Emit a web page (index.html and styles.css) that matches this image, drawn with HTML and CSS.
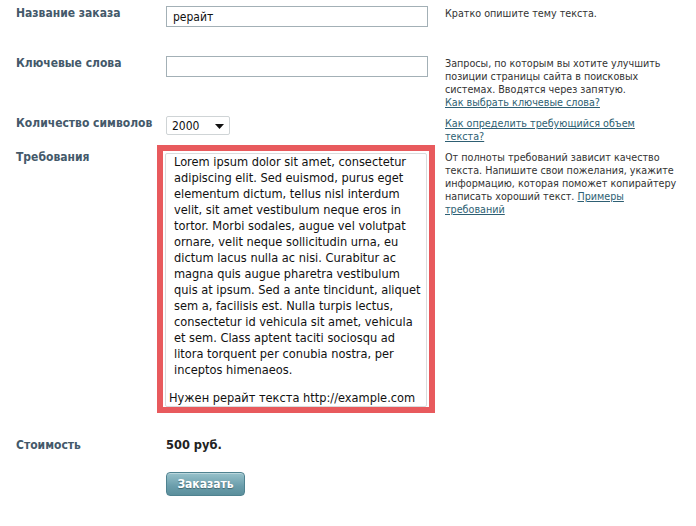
FILE: index.html
```html
<!DOCTYPE html>
<html lang="ru">
<head>
    <meta charset="UTF-8">
    <meta name="viewport" content="width=device-width, initial-scale=1.0">
    <title>Новый заказ</title>
    <link rel="stylesheet" href="styles.css">
</head>
<body>
    <!-- START ORDER FORM -->
    <form class="order-form" id="orderForm" action="/order" method="post">
        <div class="form-row row-title">
            <label class="form-label" for="title">Название заказа</label>
            <div class="form-field">
                <input type="text" id="title" name="title" value="рерайт">
            </div>
            <div class="form-hint">Кратко опишите тему текста.</div>
        </div>

        <div class="form-row row-keywords">
            <label class="form-label" for="keywords">Ключевые слова</label>
            <div class="form-field">
                <input type="text" id="keywords" name="keywords">
            </div>
            <div class="form-hint">
                Запросы, по которым вы хотите улучшить позиции страницы сайта в поисковых системах. Вводятся через запятую.<br>
                <a href="#">Как выбрать ключевые слова?</a>
            </div>
        </div>

        <div class="form-row row-size">
            <label class="form-label" for="size">Количество символов</label>
            <div class="form-field">
                <div class="select-wrap">
                    <select id="size" name="size">
                        <option value="1000">1000</option>
                        <option value="2000" selected>2000</option>
                        <option value="3000">3000</option>
                        <option value="5000">5000</option>
                    </select>
                    <svg class="select-arrow" width="9" height="5" viewBox="0 0 9 5"><path d="M0 0h9L4.5 5z" fill="#111"/></svg>
                </div>
            </div>
            <div class="form-hint"><a href="#">Как определить требующийся объем<br>текста?</a></div>
        </div>

        <div class="form-row row-req">
            <label class="form-label" for="req">Требования</label>
            <div class="form-field">
                <!-- красная рамка вокруг поля требований -->
                <div class="req-box">
                    <div class="req-text" id="req">
                        <p class="req-lorem">Lorem ipsum dolor sit amet, consectetur<br>adipiscing elit. Sed euismod, purus eget<br>elementum dictum, tellus nisl interdum<br>velit, sit amet vestibulum neque eros in<br>tortor. Morbi sodales, augue vel volutpat<br>ornare, velit neque sollicitudin urna, eu<br>dictum lacus nulla ac nisi. Curabitur ac<br>magna quis augue pharetra vestibulum<br>quis at ipsum. Sed a ante tincidunt, aliquet<br>sem a, facilisis est. Nulla turpis lectus,<br>consectetur id vehicula sit amet, vehicula<br>et sem. Class aptent taciti sociosqu ad<br>litora torquent per conubia nostra, per<br>inceptos himenaeos.</p>
                        <p class="req-note">Нужен рерайт текста http://example.com</p>
                    </div>
                </div>
            </div>
            <div class="form-hint">
                От полноты требований зависит качество текста. Напишите свои пожелания, укажите информацию, которая поможет копирайтеру написать хороший текст. <a href="#">Примеры требований</a>
            </div>
        </div>

        <div class="form-row row-cost">
            <div class="form-label">Стоимость</div>
            <div class="form-field price">500 руб.</div>
        </div>

        <div class="form-row row-submit">
            <div class="form-label"></div>
            <div class="form-field">
                <input class="btn-order" type="submit" value="Заказать">
            </div>
        </div>
    </form>
    <!-- END ORDER FORM -->
</body>
</html>
```

FILE: styles.css
```css
body {
    margin: 0;
    background-color: #fff;
    font-family: "DejaVu Sans Condensed", "DejaVu Sans", sans-serif;
    font-stretch: condensed;
    font-size: 11px;
    color: #333;
}

.order-form {
    padding: 6px 0 0 16px;
}

.form-row {
    display: flex;
    align-items: flex-start;
}

.form-label {
    width: 150px;
    flex: none;
    padding-top: 1px;
    font-weight: bold;
    font-size: 12px;
    line-height: 13px;
    color: #44596a;
}

.form-field {
    width: 262px;
    flex: none;
}

.form-hint {
    width: 236px;
    margin-left: 17px;
    padding-top: 1px;
    font-size: 10.7px;
    line-height: 13px;
    color: #333;
}

.form-hint a {
    color: #2e5f73;
    text-decoration: underline;
}

input[type="text"] {
    display: block;
    box-sizing: border-box;
    width: 262px;
    height: 21px;
    margin: 0;
    padding: 0 6px;
    border: 1px solid #a3b0b6;
    font-family: inherit;
    font-size: 12px;
    color: #111;
}

.row-title {
    margin-bottom: 29px;
}

.row-keywords {
    margin-bottom: 7px;
}

.row-size {
    min-height: 27px;
    margin-bottom: 2px;
}

.select-wrap {
    position: relative;
    width: 64px;
}

select {
    -webkit-appearance: none;
    appearance: none;
    display: block;
    box-sizing: border-box;
    width: 64px;
    height: 19px;
    margin: 0;
    padding: 0 0 0 5px;
    border: 1px solid #cfd4d6;
    border-radius: 2px;
    background-color: #fff;
    font-family: inherit;
    font-size: 12px;
    color: #111;
}

.select-arrow {
    position: absolute;
    top: 8px;
    right: 6px;
    pointer-events: none;
}

.row-req .form-label,
.row-req .form-hint {
    padding-top: 6px;
}

.req-box {
    width: 278px;
    box-sizing: border-box;
    margin-left: -9px;
    padding: 2px 2px 0;
    border: 6px solid #e85a5d;
}

.req-text {
    box-sizing: border-box;
    height: 254px;
    padding: 0;
    border: 1px solid #d9dcdd;
    border-radius: 2px;
    background-color: #fff;
    font-size: 12.7px;
    line-height: 16px;
    color: #111;
    white-space: nowrap;
    overflow: hidden;
}

.req-text p {
    margin: 0;
}

.req-lorem {
    padding-left: 8px;
}

.req-note {
    margin-top: 12px !important;
    padding-left: 3px;
}

.row-cost {
    margin-top: 25px;
    margin-bottom: 20px;
}

.price {
    font-weight: bold;
    font-size: 12.7px;
    line-height: 13px;
    color: #222;
}

.btn-order {
    box-sizing: border-box;
    width: 79px;
    height: 24px;
    padding: 0 0 1px;
    border: 1px solid #4f8290;
    border-radius: 4px;
    background: linear-gradient(#98c2cb, #6a9dab 60%, #5b8f9c);
    box-shadow: inset 0 1px 0 rgba(255, 255, 255, 0.35);
    font-family: inherit;
    font-weight: bold;
    font-size: 12px;
    color: #fff;
    text-shadow: 0 1px 1px rgba(0, 0, 0, 0.35);
    cursor: pointer;
}
```
